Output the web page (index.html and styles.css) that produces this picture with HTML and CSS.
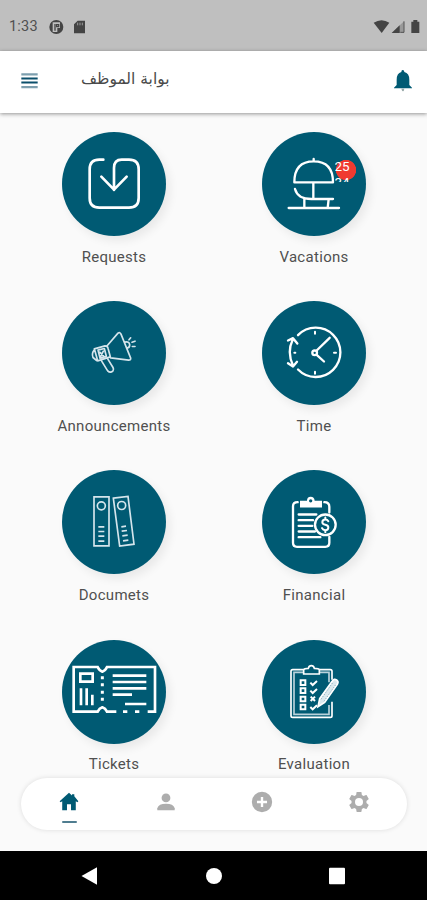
FILE: index.html
```
<!DOCTYPE html>
<html lang="en">
<head>
<meta charset="utf-8">
<title>Employee portal</title>
<link rel="stylesheet" href="styles.css">
</head>
<body>
<div class="screen">
  <div class="status">
    <span class="clock">1:33</span>
    <svg class="status-left" viewBox="144 52 120 54">
      <circle cx="169" cy="79" r="21" fill="#444"/>
      <path d="M158 65h22v17h-8v12h-14z" fill="#bfbfbf"/>
      <path d="M165 70v20M170 72h6v6h-6z" stroke="#444" stroke-width="4" fill="none"/>
      <path d="M233 60h22v38h-33V71z" fill="#444"/>
      <path d="M233 66v8M240 66v8M247 66v8" stroke="#999" stroke-width="3"/>
    </svg>
    <svg class="status-right" viewBox="480 52 144 54">
      <path d="M482 66q24-15 47 0l-23 31z" fill="#444"/>
      <path d="M536 97l37-35v35z" fill="#999"/>
      <path d="M536 97l24-23v23z" fill="#444"/>
      <path d="M562 95h11V62" fill="none" stroke="#555" stroke-width="3"/>
      <path d="M595 63h6v-5h12v5h6v34h-24z" fill="#444"/>
    </svg>
  </div>
  <header class="bar">
    <svg class="menu" viewBox="64 215 50 52">
      <path d="M64 222h50M64 261h50" stroke="#7d9fae" stroke-width="7"/>
      <path d="M64 235h50M64 247h50" stroke="#0b4f6b" stroke-width="6"/>
    </svg>
    <h1 class="title" lang="ar" dir="rtl">بوابة الموظف</h1>
    <svg class="bell" viewBox="540 207 60 72">
      <path d="M565 266h9q-1 8-4 8t-5-8z" fill="#9aa"/>
      <path d="M569 210q5 0 5 6 15 4 15 23v16l8 8v2h-54v-2l8-8v-16q0-19 14-23 0-6 4-6z" fill="#005a73"/>
    </svg>
  </header>
  <main class="grid">
    <div class="tile">
      <div class="disc">
        <svg viewBox="36 22 312 312" class="line w8">
          <path d="M160 105h-12q-29 0-29 29v86q0 29 29 29h89q29 0 29-29v-86q0-29-29-29h-22q-23 0-23 25v66M154 156l38 39 38-39"/>
        </svg>
      </div>
      <span class="label">Requests</span>
    </div>
    <div class="tile">
      <div class="disc">
        <svg viewBox="36 22 312 312" class="line w7">
          <path d="M133 173q0-63 58-63t58 63zM191 110v-7M190 173v49M135 193q8 30 49 30h65M163 223v27M236 223l-3 27M116 250h151"/>
        </svg>
        <span class="badge">25<br>34</span>
      </div>
      <span class="label">Vacations</span>
    </div>
    <div class="tile">
      <div class="disc">
        <svg viewBox="36 19.5 312 312" class="line w5 soft">
          <path d="M172 153l32-37q6-4 9 3l29 72q1 6-6 6l-54-7M133 163l32-9q8 0 9 7l7 26-38 12zM133 166q-9 10-4 23l11 9M144 167l19-5 6 23-19 6zM149 173l12 12M160 170l-9 17M155 200l18 29q8 8 16 0 3-5 0-10l-16-26M225 143q12-3 14 7 1 8-6 10M237 136l5-6M246 143l9-3M247 156h8"/>
        </svg>
      </div>
      <span class="label">Announcements</span>
    </div>
    <div class="tile">
      <div class="disc">
        <svg viewBox="36 19.5 312 312" class="line w7">
          <path d="M144 122a74 74 0 1 1 0 103M128 136q-18 37 1 77M114 138l15-7 13 16M114 206l15 10 12-14" />
          <circle cx="194" cy="175" r="7"/>
          <path d="M200 168l39-38M200 181l22 20" stroke-width="7"/>
          <path d="M195 112v6M195 232v6M252 175h6M133 175h3" stroke-width="6"/>
        </svg>
      </div>
      <span class="label">Time</span>
    </div>
    <div class="tile">
      <div class="disc">
        <svg viewBox="36 16.5 312 312" class="line w5 soft square">
          <path d="M132 97h45v147h-45zM190 101l44-5 18 143-43 6z"/>
          <circle cx="154" cy="124" r="12"/>
          <circle cx="215" cy="123" r="12"/>
          <path d="M145 187h18M145 201h18M145 215h18M145 230h18M214 187l14-2M215 200l16-2M217 214l16-2M219 229l16-2"/>
        </svg>
      </div>
      <span class="label">Documets</span>
    </div>
    <div class="tile">
      <div class="disc">
        <svg viewBox="36 16.5 312 312" class="line w7">
          <path d="M143 113q-14 0-14 12v110q0 12 12 12h85q12 0 12-12v-18M223 113q15 0 15 14v17"/>
          <path d="M150 129v-20h21q0-12 11-12t12 12h22v20z" fill="#fff" stroke="none"/>
          <circle cx="182" cy="109" r="5" fill="#005a73" stroke="none"/>
          <path d="M146 150h53M146 167h43M146 184h41M146 201h49M146 218h65"/>
          <circle cx="226" cy="181" r="31"/>
          <path d="M235 170q-3-5-9-5-9 0-9 8 0 6 9 8t9 8q0 8-9 8-7 0-10-6M226 159v6M226 197v6" stroke-width="6"/>
        </svg>
      </div>
      <span class="label">Financial</span>
    </div>
    <div class="tile">
      <div class="disc">
        <svg viewBox="36 24 312 312" class="line w8 square">
          <path d="M199 239h-28q-5-10-14-13-9 3-14 13H71V105h72q5 11 14 14 9-3 14-14h144v134h-22M219 239h13M255 239h13M91 125h37v24H91z"/>
          <path d="M157 133v9M157 154v9M157 176v9M157 197v9" stroke-width="9"/>
          <path d="M93 169v51M110 169v51M127 188v32M188 131h101M188 150h101M188 169h101M188 188h58M225 216h64"/>
        </svg>
      </div>
      <span class="label">Tickets</span>
    </div>
    <div class="tile">
      <div class="disc">
        <svg viewBox="36 24 312 312" class="line w5 square">
          <path d="M160 113h-32q-5 0-5 5v133q0 5 5 5h113q5 0 5-5v-42M208 113h33q5 0 5 5v25"/>
          <path d="M161 121h-29v126h105v-28M208 121h29v30" stroke="#b9d2db"/>
          <path d="M161 126v-13q2-4 14-4 2-8 9-8t9 8q13 0 15 4v13z"/>
          <path d="M152 145h14v14h-14zM152 169h14v14h-14zM152 194h14v14h-14zM152 218h14v14h-14z" stroke-width="6"/>
          <path d="M181 152l7 7 13-12M181 176l7 7 13-12M182 194l13 13M195 194l-13 13M181 225l7 7 13-12" stroke-width="6"/>
          <path d="M204 224l5-24 38-53q5-8 13-3 7 5 2 13l-38 54z" fill="#dce9ee" stroke="#fff"/>
          <path d="M213 202l35-50M222 208l35-50" stroke="#8db3c1" stroke-width="3" stroke-dasharray="4 4"/>
        </svg>
      </div>
      <span class="label">Evaluation</span>
    </div>
  </main>
  <nav class="tabs">
    <div class="tab active">
      <svg viewBox="0 0 24 24"><path d="M17.8 5.8V3.6h-2.5v1.2L12 2 1.8 11.2l1 1.2 1.8-1.3V21h5.200v-6.500h4.400V21h5.200v-9.900l1.800 1.300 1-1.200z"/></svg>
      <i class="mark"></i>
    </div>
    <div class="tab"><svg viewBox="0 0 24 24"><circle cx="12" cy="7.500" r="4.800"/><path d="M2.500 21v-2.200Q4 14 12 14t9.500 4.800V21z"/></svg></div>
    <div class="tab"><svg viewBox="0 0 24 24"><path fill-rule="evenodd" d="M12 .9a11.100 11.100 0 1 0 0 22.200 11.100 11.100 0 0 0 0-22.200zM10.700 6.500h2.600v4.200h4.200v2.600h-4.200v4.200h-2.600v-4.200H6.500v-2.600h4.200z"/></svg></div>
    <div class="tab"><svg class="gear" viewBox="2 2 20 20"><path d="M19.430 12.980c.04-.32.070-.64.070-.98s-.03-.66-.07-.98l2.110-1.650c.19-.15.240-.42.120-.64l-2-3.460c-.12-.22-.39-.3-.61-.22l-2.490 1c-.52-.4-1.080-.73-1.690-.98l-.38-2.650C14.460 2.180 14.250 2 14 2h-4c-.25 0-.46.180-.49.420l-.38 2.650c-.61.250-1.170.590-1.690.98l-2.490-1c-.23-.09-.49 0-.61.220l-2 3.460c-.13.220-.07.490.120.640l2.110 1.650c-.04.320-.07.650-.07.980s.03.660.070.980l-2.110 1.650c-.19.150-.24.420-.12.640l2 3.460c.12.220.390.300.610.220l2.490-1c.52.400 1.080.730 1.690.980l.38 2.650c.03.240.240.420.490.420h4c.25 0 .46-.18.490-.42l.38-2.650c.61-.25 1.170-.59 1.690-.98l2.490 1c.23.090.490 0 .61-.22l2-3.460c.12-.22.070-.49-.12-.64zM12 16a4 4 0 1 1 0-8 4 4 0 0 1 0 8z"/></svg></div>
  </nav>
  <footer class="system">
    <svg viewBox="0 0 18 18"><path d="M.5 9L16 .3v17.400z"/></svg>
    <svg viewBox="0 0 18 18"><circle cx="9" cy="9" r="8"/></svg>
    <svg viewBox="0 0 18 18"><rect x="1" y=".7" width="16" height="16.500" rx="1"/></svg>
  </footer>
</div>
</body>
</html>
```
FILE: styles.css
```
* { box-sizing: border-box; }
body {
  margin: 0;
  background: #fafafa;
  font-family: Roboto, "Liberation Sans", sans-serif;
}
svg { display: block; }
.screen {
  position: relative;
  display: flex;
  flex-direction: column;
  height: 900px;
  overflow: hidden;
}
.status {
  display: flex;
  align-items: center;
  height: 51px;
  padding: 2px 6px 0 9px;
  background: #bfbfbf;
}
.clock {
  width: 39px;
  font-size: 14.5px;
  letter-spacing: .2px;
  color: #505050;
}
.status-left { width: 40px; height: 18px; }
.status-right { width: 48px; height: 18px; margin-left: auto; }
.bar {
  display: flex;
  align-items: center;
  height: 62px;
  padding: 0 14px 4px 21px;
  background: #fff;
  box-shadow: 0 1px 4px rgba(0, 0, 0, .42);
}
.menu { width: 17px; height: 17px; }
.title {
  margin: -2px 0 0 43px;
  font: 400 15.5px/20px "DejaVu Sans", sans-serif;
  color: #4a4a4a;
  white-space: nowrap;
}
.bell { width: 20px; height: 24px; margin: 2px 0 0 auto; }
.grid {
  display: grid;
  grid-template-columns: 200px 200px;
  grid-auto-rows: 169.200px;
  height: 738px;
  padding: 19px 13px 0 14px;
}
.tile {
  display: flex;
  flex-direction: column;
  align-items: center;
}
.disc {
  position: relative;
  width: 104px;
  height: 104px;
  border-radius: 50%;
  background: #005a73;
  box-shadow: 4px 5px 10px rgba(0, 0, 0, .07);
}
.disc svg { width: 104px; height: 104px; }
.line {
  fill: none;
  stroke: #fff;
  stroke-linecap: round;
  stroke-linejoin: round;
}
.w5 { stroke-width: 5; }
.w7 { stroke-width: 7; }
.w8 { stroke-width: 8; }
.soft { stroke: #d5e5ec; }
.square { stroke-linecap: butt; stroke-linejoin: miter; }
.badge {
  position: absolute;
  top: 27px;
  left: 72.500px;
  width: 22px;
  height: 23px;
  overflow: hidden;
  background: radial-gradient(circle at 11px 11px, #f03a30 9.800px, transparent 10.400px);
  color: #fff;
  font-size: 13.500px;
  line-height: 15.500px;
}
.label {
  margin-top: 10.500px;
  font-size: 15px;
  line-height: 20px;
  letter-spacing: .3px;
  color: #505050;
  white-space: nowrap;
}
.tabs {
  position: absolute;
  top: 778px;
  left: 21px;
  display: grid;
  grid-template-columns: repeat(4, 1fr);
  width: 386px;
  height: 52px;
  border-radius: 26px;
  background: #fff;
  box-shadow: 0 0 5px rgba(0, 0, 0, .12);
}
.tab {
  display: flex;
  flex-direction: column;
  align-items: center;
  padding-top: 13px;
  fill: #adadad;
}
.tab svg { width: 22px; height: 22px; }
.tab svg.gear { width: 20px; height: 20px; margin-top: 1px; }
.active { fill: #005a73; }
.mark {
  width: 15px;
  height: 2px;
  margin-top: 7.500px;
  border-radius: 1px;
  background: #4f7d90;
}
.system {
  display: flex;
  align-items: center;
  justify-content: center;
  gap: 105.500px;
  height: 49px;
  background: #000;
  fill: #fff;
}
.system svg { width: 18px; height: 18px; }
```
